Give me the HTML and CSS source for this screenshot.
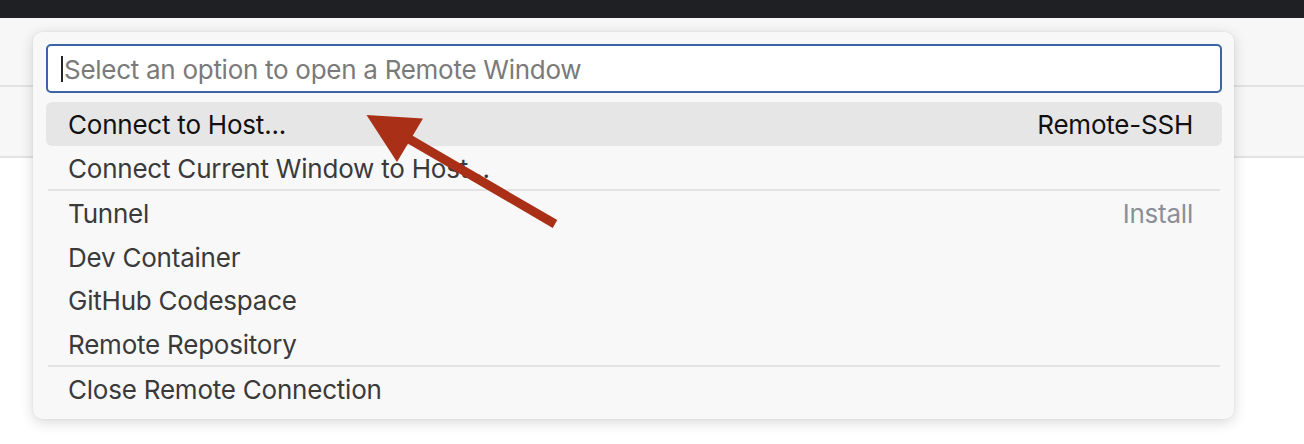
FILE: index.html
```html
<!DOCTYPE html>
<html lang="en">
<head>
<meta charset="utf-8">
<title>Remote Window</title>
<link rel="stylesheet" href="styles.css">
</head>
<body>
<div class="titlebar"></div>
<div class="band band-one"></div>
<div class="band band-two"></div>

<div class="quickpick">
  <div class="input">
    <span class="caret"></span>
    <span class="placeholder">Select an option to open a Remote Window</span>
  </div>
  <div class="list">
    <div class="row selected"><span class="label">Connect to Host...</span><span class="desc">Remote-SSH</span></div>
    <div class="row"><span class="label">Connect Current Window to Host...</span></div>
    <div class="row sep"><span class="label">Tunnel</span><span class="desc muted">Install</span></div>
    <div class="row"><span class="label">Dev Container</span></div>
    <div class="row"><span class="label">GitHub Codespace</span></div>
    <div class="row"><span class="label">Remote Repository</span></div>
    <div class="row sep"><span class="label">Close Remote Connection</span></div>
  </div>
</div>

<svg class="arrow" width="1304" height="444" viewBox="0 0 1304 444">
  <line x1="404" y1="136" x2="555" y2="224" stroke="#a92f17" stroke-width="9"/>
  <polygon points="366.5,115 423,118.5 397,162" fill="#a92f17"/>
</svg>
</body>
</html>
```

FILE: styles.css
```css
* { box-sizing: border-box; }

html, body {
  margin: 0;
  padding: 0;
}

body {
  width: 1304px;
  height: 444px;
  background: #ffffff;
  font-family: Inter, "Noto Sans", "Liberation Sans", sans-serif;
  position: relative;
  overflow: hidden;
}

.titlebar {
  height: 18px;
  background: #1f2024;
}

.band {
  background: #f7f7f7;
  border-bottom: 2px solid #e3e3e3;
}

.band-one { height: 69px; }
.band-two { height: 71px; }

.quickpick {
  position: absolute;
  left: 33px;
  top: 32px;
  width: 1201px;
  padding: 12px 12px 8px 13px;
  background: #f8f8f8;
  border-radius: 9px;
  box-shadow: 0 3px 14px rgba(0, 0, 0, 0.16), 0 0 2px rgba(0, 0, 0, 0.08);
}

.input {
  height: 49px;
  border: 2px solid #3a64a6;
  border-radius: 5px;
  background: #ffffff;
  display: flex;
  align-items: center;
  padding-left: 13px;
  padding-top: 1px;
  margin-bottom: 9px;
}

.caret {
  width: 2px;
  height: 26px;
  background: #222;
  margin-right: 1px;
}

.placeholder {
  font-size: 26px;
  letter-spacing: -0.28px;
  color: #7a7a7a;
}

.list {
  display: flex;
  flex-direction: column;
}

.row {
  height: 43.5px;
  display: flex;
  align-items: center;
  justify-content: space-between;
  padding: 2px 29px 0 22px;
  font-size: 26px;
  letter-spacing: -0.22px;
  color: #3a3a3a;
  border-radius: 6px;
}

.row.selected {
  background: #e6e6e6;
  color: #111111;
}

.row.sep {
  height: 45.5px;
  border-top: 2px solid #e3e3e3;
  border-radius: 0;
  margin: 0 2px;
  padding-left: 20px;
  padding-right: 27px;
}

.desc.muted {
  color: #8b8f97;
}

.arrow {
  position: absolute;
  left: 0;
  top: 0;
  pointer-events: none;
}
```
